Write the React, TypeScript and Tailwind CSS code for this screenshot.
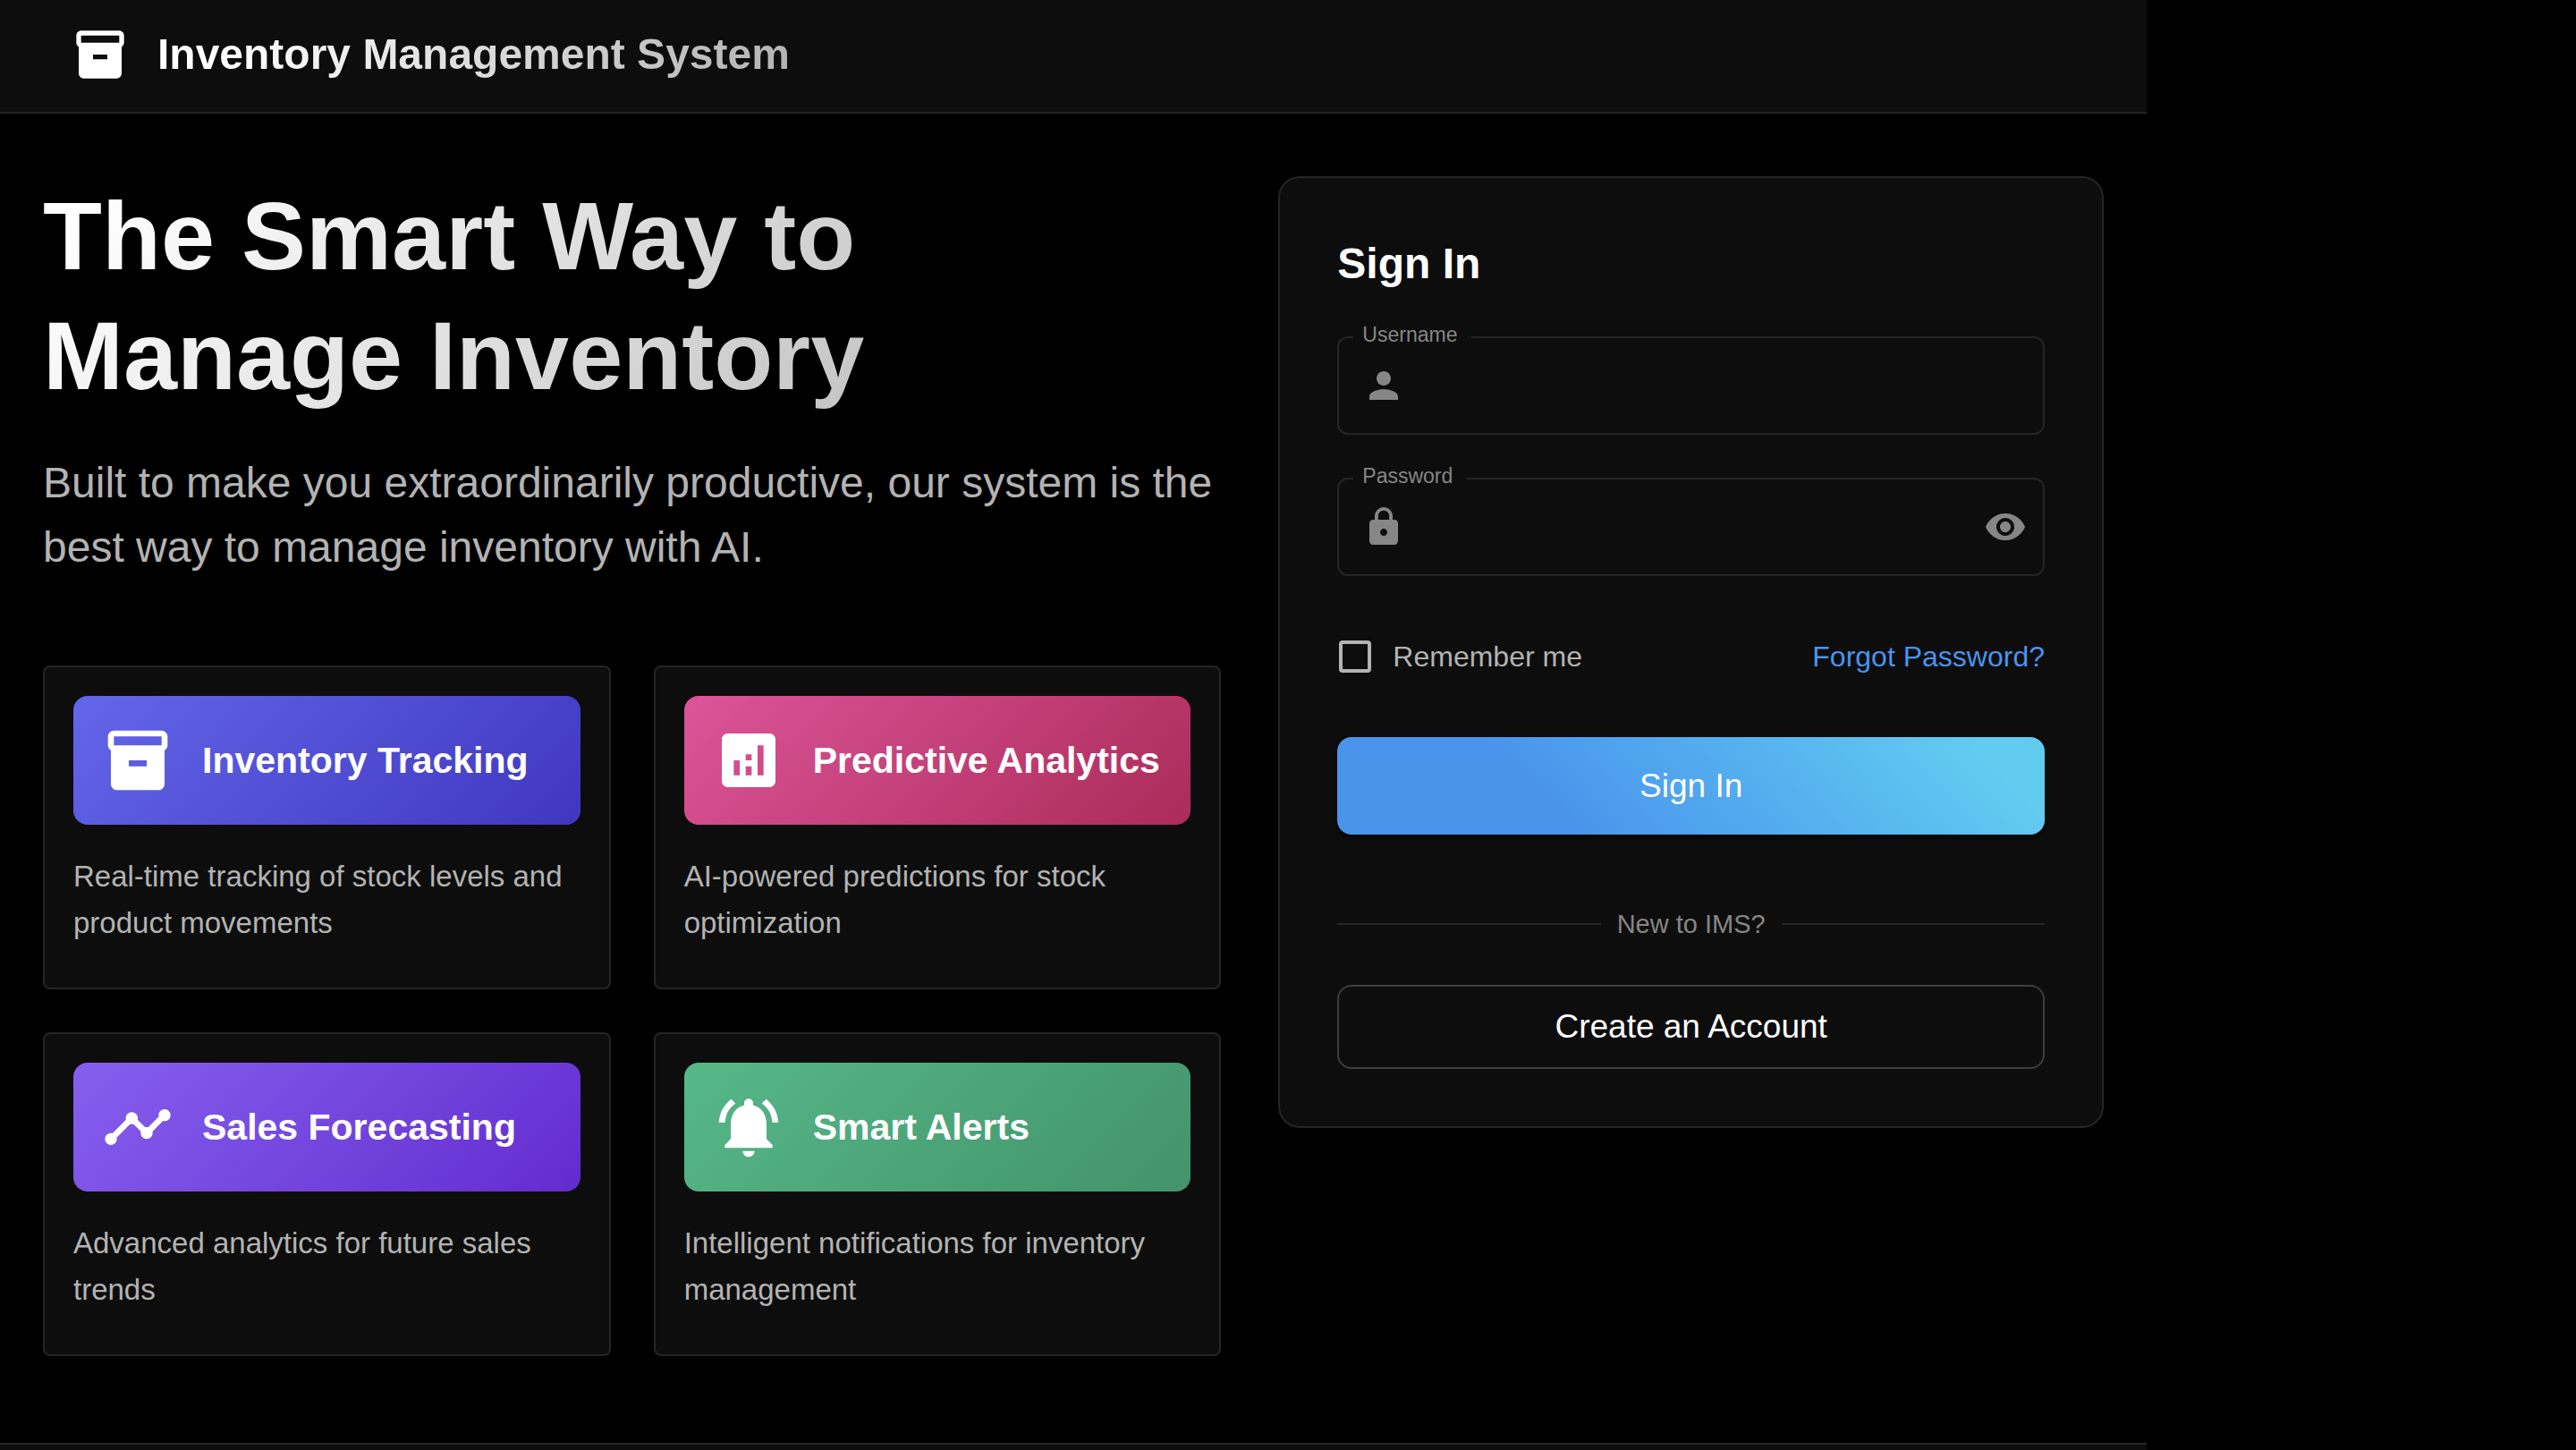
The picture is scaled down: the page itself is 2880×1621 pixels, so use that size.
import { useState } from "react";
import type { ReactNode } from "react";
import type { IconType } from "react-icons";
import {
  MdAnalytics,
  MdInventory2,
  MdLock,
  MdNotificationsActive,
  MdPerson,
  MdTimeline,
  MdVisibility,
} from "react-icons/md";

type Feature = {
  title: string;
  description: string;
  icon: IconType;
  banner: string;
};

const features: Feature[] = [
  {
    title: "Inventory Tracking",
    description: "Real-time tracking of stock levels and product movements",
    icon: MdInventory2,
    banner: "from-[#6466e9] to-[#4036c0]",
  },
  {
    title: "Predictive Analytics",
    description: "AI-powered predictions for stock optimization",
    icon: MdAnalytics,
    banner: "from-[#dc5599] to-[#ab2b5a]",
  },
  {
    title: "Sales Forecasting",
    description: "Advanced analytics for future sales trends",
    icon: MdTimeline,
    banner: "from-[#865fee] to-[#632acf]",
  },
  {
    title: "Smart Alerts",
    description: "Intelligent notifications for inventory management",
    icon: MdNotificationsActive,
    banner: "from-[#56b888] to-[#43936b]",
  },
];

function FeatureCard({ title, description, icon: Icon, banner }: Feature) {
  return (
    <article className="rounded-lg border-2 border-[#252525] bg-[#0d0d0d] px-8 pt-8 pb-[46px]">
      <div className={`flex items-center gap-8 rounded-2xl bg-linear-135 p-8 ${banner}`}>
        <Icon className="size-20 shrink-0" />
        <h2 className="text-[41px] leading-[64px] font-bold whitespace-nowrap">{title}</h2>
      </div>
      <p className="mt-8 text-[33px] leading-[52px] text-[#b3b3b3]">{description}</p>
    </article>
  );
}

type FieldProps = {
  id: string;
  label: string;
  type: string;
  icon: IconType;
  children?: ReactNode;
};

function Field({ id, label, type, icon: Icon, children }: FieldProps) {
  return (
    <div className="relative flex h-[110px] items-center rounded-xl border-2 border-[#252525] pr-[18px] pl-[26px] text-[#868686] focus-within:border-[#4a94ec]">
      <label
        htmlFor={id}
        className="absolute -top-4 left-4 bg-[#0d0d0d] pr-4 pl-2.5 text-[23px] leading-6"
      >
        {label}
      </label>
      <Icon className="size-12 shrink-0" />
      <input
        id={id}
        name={id}
        type={type}
        className="h-full min-w-0 flex-1 bg-transparent px-4 text-[33px] text-white outline-none"
      />
      {children}
    </div>
  );
}

export default function App() {
  const [showPassword, setShowPassword] = useState(false);

  return (
    <div className="flex min-h-screen flex-col bg-black font-['Liberation_Sans',Arial,sans-serif] text-white">
      <header className="flex w-full max-w-[2400px] items-center gap-8 border-b-2 border-[#252525] bg-[#0d0d0d] px-20 pt-[29px] pb-8">
        <MdInventory2 className="size-16 shrink-0" />
        <span className="bg-linear-90 from-white from-10% to-[#b3b3b3] bg-clip-text text-[48px] leading-[64px] font-bold text-transparent">
          Inventory Management System
        </span>
      </header>

      <main className="grid w-full max-w-[2400px] grid-cols-12 items-start gap-16 px-12 pt-[70px] pb-[97px]">
        <section className="col-span-7">
          <h1 className="bg-linear-135 from-white from-5% to-[#b0b0b0] bg-clip-text text-[108px] leading-[134px] font-bold text-transparent">
            The Smart Way to
            <br />
            Manage Inventory
          </h1>
          <p className="mt-[39px] text-[48px] leading-[72px] text-[#b3b3b3]">
            Built to make you extraordinarily productive, our system is the best way to manage
            inventory with AI.
          </p>
          <div className="mt-24 grid grid-cols-2 gap-12">
            {features.map((feature) => (
              <FeatureCard key={feature.title} {...feature} />
            ))}
          </div>
        </section>

        <section className="col-span-5 rounded-3xl border-2 border-[#252525] bg-[#0d0d0d] p-16">
          <h2 className="text-[48px] leading-[64px] font-bold">Sign In</h2>
          <form onSubmit={(event) => event.preventDefault()}>
            <div className="mt-[49px] flex flex-col gap-12">
              <Field id="username" label="Username" type="text" icon={MdPerson} />
              <Field
                id="password"
                label="Password"
                type={showPassword ? "text" : "password"}
                icon={MdLock}
              >
                <button
                  type="button"
                  aria-label="Toggle password visibility"
                  onClick={() => setShowPassword(!showPassword)}
                >
                  <MdVisibility className="size-12" />
                </button>
              </Field>
            </div>

            <div className="my-16 flex min-h-13 items-center justify-between text-[32px] leading-[48px]">
              <label className="flex items-center gap-6 pl-0.5 text-[#b3b3b3]">
                <input
                  type="checkbox"
                  name="remember"
                  className="size-9 appearance-none rounded-sm border-4 border-[#b3b3b3] checked:bg-[#4a94ec]"
                />
                Remember me
              </label>
              <a href="#forgot-password" className="text-[#4a94ec]">
                Forgot Password?
              </a>
            </div>

            <button
              type="submit"
              className="h-[109px] w-full rounded-2xl bg-linear-45 from-[#4a94ec] from-30% to-[#62cbf0] to-90% text-[37px] shadow-md shadow-black/60"
            >
              Sign In
            </button>
          </form>

          <div className="mt-20 mb-12 flex items-center gap-[18px] text-[29px] leading-10 text-[#868686]">
            <span className="h-0.5 flex-1 bg-[#252525]" />
            New to IMS?
            <span className="h-0.5 flex-1 bg-[#252525]" />
          </div>

          <button
            type="button"
            className="h-[94px] w-full rounded-2xl border-2 border-[#3d3d3d] text-[37px]"
          >
            Create an Account
          </button>
        </section>
      </main>

      <footer className="w-full max-w-[2400px] flex-1 border-t-2 border-[#252525] bg-[#0d0d0d]" />
    </div>
  );
}
